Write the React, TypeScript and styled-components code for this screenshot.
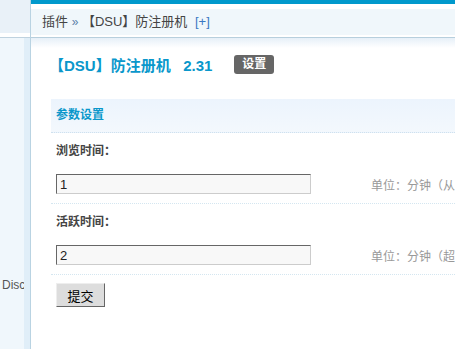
import React from 'react';
import styled, { createGlobalStyle } from 'styled-components';

const GlobalStyle = createGlobalStyle`
  html, body {
    margin: 0;
    padding: 0;
    background: #fff;
  }
  body {
    font-family: "Liberation Sans", "Noto Sans CJK SC", sans-serif;
    font-size: 12px;
    color: #444;
  }
`;

type Setting = {
  label: string,
  value: string,
  hint: string,
}

const settings: Setting[] = [
  { label: '浏览时间：', value: '1', hint: '单位：分钟（从' },
  { label: '活跃时间：', value: '2', hint: '单位：分钟（超' },
];

function App() {
  return (
    <Page>
      <GlobalStyle />
      <Sidebar>
        <SideTop />
        <SideGap />
        <SideBody>
          <SideInner>
            <SideItem>Discuz!</SideItem>
          </SideInner>
          <SideStrip />
        </SideBody>
      </Sidebar>
      <Main>
        <TopBar />
        <Crumb>
          插件 <Raquo>»</Raquo> 【DSU】防注册机 <Plus>[+]</Plus>
        </Crumb>
        <HeaderLine />
        <Content>
          <TitleRow>
            <Title>【DSU】防注册机&nbsp;&nbsp; 2.31</Title>
            <Badge>设置</Badge>
          </TitleRow>
          <SectionHead>参数设置</SectionHead>
          {settings.map(s => (
            <React.Fragment key={s.label}>
              <LabelRow>{s.label}</LabelRow>
              <InputRow>
                <TextInput defaultValue={s.value} />
                <Hint>{s.hint}</Hint>
              </InputRow>
            </React.Fragment>
          ))}
          <SubmitButton>提交</SubmitButton>
        </Content>
      </Main>
    </Page>
  )
}

export default App;

const Page = styled.div`
  display: flex;
  width: 455px;
  height: 349px;
  overflow: hidden;
`

const Sidebar = styled.div`
  width: 30px;
  flex-shrink: 0;
  display: flex;
  flex-direction: column;
  border-right: 1px solid #b9d3e2;
`

const SideTop = styled.div`
  height: 33px;
  background: #e9f1f8;
`

const SideGap = styled.div`
  height: 4px;
  background: #fff;
  border-bottom: 1px solid #bfd2df;
`

const SideBody = styled.div`
  flex: 1;
  display: flex;
`

const SideInner = styled.div`
  width: 24px;
  overflow: hidden;
  background: #f0f7fc;
  padding-top: 239px;
`

const SideItem = styled.div`
  padding-left: 2px;
  white-space: nowrap;
  color: #555;
  font-size: 12px;
  line-height: 16px;
`

const SideStrip = styled.div`
  flex: 1;
  background: #e0eef8;
`

const Main = styled.div`
  flex: 1;
  display: flex;
  flex-direction: column;
  min-width: 0;
`

const TopBar = styled.div`
  height: 4px;
  background: #0099cc;
  margin-bottom: 5px;
`

const Crumb = styled.div`
  height: 26px;
  line-height: 26px;
  background: #f0f7fb;
  padding-left: 11px;
  font-size: 13px;
  color: #444;
  white-space: nowrap;
  margin-bottom: 2px;
`

const Raquo = styled.span`
  color: #5a7fa8;
  font-size: 12px;
`

const Plus = styled.span`
  color: #3a78c3;
  margin-left: 4px;
`

const HeaderLine = styled.div`
  height: 10px;
  border-top: 1px solid #b7cfdd;
  background: linear-gradient(#e6f0f8, #fff);
`

const Content = styled.div`
  padding: 7px 0 0 20px;
  display: flex;
  flex-direction: column;
  align-items: flex-start;
`

const TitleRow = styled.div`
  display: flex;
  align-items: center;
  height: 19px;
  gap: 22px;
  margin-bottom: 25px;
`

const Title = styled.div`
  color: #0a97cb;
  font-weight: bold;
  font-size: 15px;
  white-space: nowrap;
  margin-left: -2px;
`

const Badge = styled.span`
  background: #666;
  color: #fff;
  font-weight: bold;
  font-size: 12px;
  height: 19px;
  line-height: 19px;
  width: 40px;
  text-align: center;
  border-radius: 3px;
`

const SectionHead = styled.div`
  align-self: stretch;
  height: 33px;
  line-height: 33px;
  padding-left: 5px;
  background: linear-gradient(#ecf4fd, #f3f8fd);
  border-bottom: 1px dotted #cfe1ee;
  color: #0a97cb;
  font-weight: bold;
  font-size: 12px;
`

const LabelRow = styled.div`
  height: 36px;
  line-height: 36px;
  padding-left: 5px;
  font-weight: bold;
  color: #444;
`

const InputRow = styled.div`
  align-self: stretch;
  display: flex;
  align-items: center;
  padding: 5px 0 9px 5px;
  border-bottom: 1px dotted #d4e6f0;
  white-space: nowrap;
`

const TextInput = styled.input`
  box-sizing: border-box;
  width: 256px;
  height: 20px;
  padding: 0 3px;
  border: 1px solid;
  border-color: #666 #ccc #ccc #666;
  background: #f8f8f8;
  font-family: "Liberation Sans", sans-serif;
  font-size: 13px;
  color: #222;
  outline: none;
`

const Hint = styled.span`
  margin-left: 60px;
  color: #999;
  font-size: 12px;
`

const SubmitButton = styled.button`
  margin: 8px 0 0 5px;
  width: 49px;
  height: 24px;
  padding: 0;
  background: #ddd;
  border: 1px solid;
  border-color: #eee #666 #666 #eee;
  font-family: "Liberation Sans", "Noto Sans CJK SC", sans-serif;
  font-size: 13px;
  color: #000;
`
